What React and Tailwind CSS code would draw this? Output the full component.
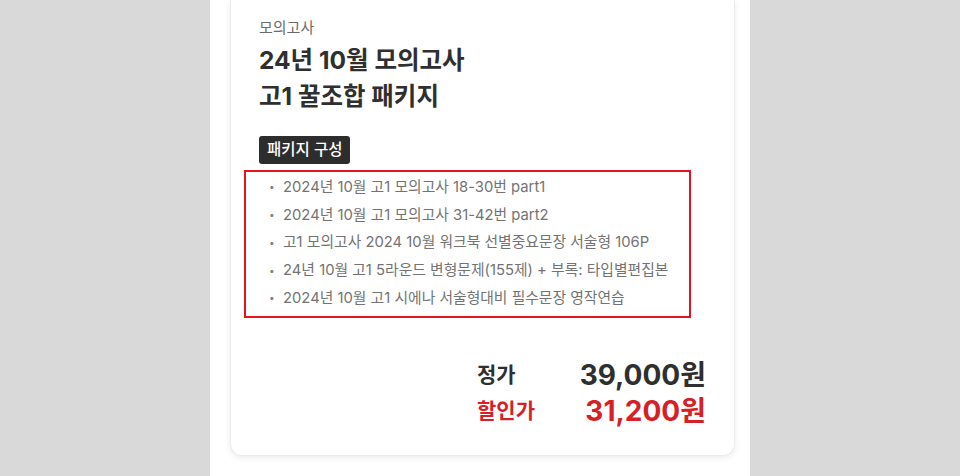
import React from 'react';

const items = [
  '2024년 10월 고1 모의고사 18-30번 part1',
  '2024년 10월 고1 모의고사 31-42번 part2',
  '고1 모의고사 2024 10월 워크북 선별중요문장 서술형 106P',
  '24년 10월 고1 5라운드 변형문제(155제) + 부록: 타입별편집본',
  '2024년 10월 고1 시에나 서술형대비 필수문장 영작연습',
];

export default function App() {
  return (
    <div
      className="h-[476px] overflow-hidden bg-[#d9d9d9]"
      style={{ fontFamily: 'Inter, "Noto Sans CJK KR", sans-serif' }}
    >
      <div className="w-[540px] h-full mx-auto bg-white px-5">
        <div className="w-[505px] bg-white border-x border-b border-[#ececec] rounded-b-[12px] shadow-[0_2px_6px_rgba(0,0,0,0.08)] px-7 pt-[18px] pb-[26px]">
          <p className="text-[15px] leading-5 text-[#6b6b6b]">모의고사</p>
          <h1 className="mt-1 text-[24.5px] leading-9 font-bold text-[#2f2f2f]">
            24년 10월 모의고사
            <br />
            고1 꿀조합 패키지
          </h1>

          <div className="mt-[22px] inline-flex h-7 items-center rounded-[3px] bg-[#2d2d2d] px-2 text-[15.5px] font-medium text-white">
            패키지 구성
          </div>

          <ul className="mt-[6px] -ml-[15px] w-[447px] border-2 border-[#e8131b] pt-[1px] pb-[4px]">
            {items.map((item) => (
              <li key={item} className="flex items-center h-[27.75px] text-[14.8px] text-[#737373]">
                <span className="w-[37px] pl-[23px] text-[10px] text-[#808080]">•</span>
                <span>{item}</span>
              </li>
            ))}
          </ul>

          <div className="mt-[39px] ml-auto w-[229px] grid grid-cols-[auto_1fr] items-center">
            <span className="text-[21px] leading-9 font-semibold text-[#2f2f2f]">정가</span>
            <span className="text-right text-[28px] leading-9 font-bold text-[#2f2f2f]">39,000원</span>
            <span className="text-[21px] leading-9 font-semibold text-[#d61f26]">할인가</span>
            <span className="text-right text-[28px] leading-9 font-bold text-[#d61f26]">31,200원</span>
          </div>
        </div>
      </div>
    </div>
  );
}
